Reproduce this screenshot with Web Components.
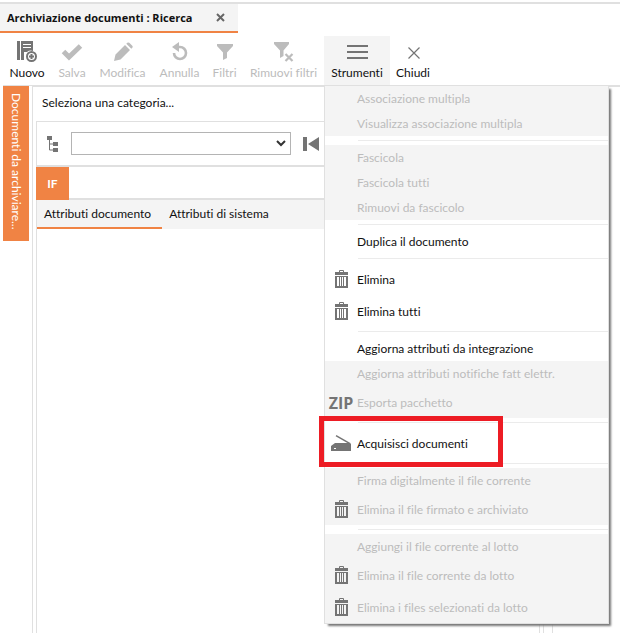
<!DOCTYPE html>
<html lang="it">
<head>
<meta charset="utf-8">
<title>Archiviazione documenti : Ricerca</title>
<style>
  html, body { margin: 0; height: 100%; }
  body {
    font: 12px/16px Lato, "Noto Sans", sans-serif; font-variant-ligatures: none;
    color: #111; background: #fff; overflow: hidden;
    --accent: #f08344; --line: #e0e0e0; --soft: #f4f4f4; --off: #bcbcbc; --icon: #747474;
  }
</style>
</head>
<body>
<archive-app></archive-app>

<script>
const define = (name, html, setup) => {
  const tpl = document.createElement('template');
  tpl.innerHTML = html;
  customElements.define(name, class extends HTMLElement {
    constructor() {
      super();
      this.attachShadow({ mode: 'open' }).append(tpl.content.cloneNode(true));
    }
    connectedCallback() { if (setup) setup(this, this.shadowRoot); }
  });
};

const icons = {
  nuovo: [20, 22, '<path fill="currentColor" d="M0 0h3v19H0zM4 0h12v10a6 6 0 0 0-6 1H7v8H4z"/><path stroke="#fff" d="M6 3.500h8M6 6.500h8"/><circle cx="14.500" cy="15.500" r="4.500" fill="#fff" stroke="currentColor" stroke-width="2"/><path stroke="currentColor" stroke-width="2" d="M14.500 13v5M12 15.500h5"/>'],
  salva: [22, 18, '<path fill="none" stroke="currentColor" stroke-width="5" d="M2.500 8.500l5.500 5.500L19.500 3"/>'],
  modifica: [20, 20, '<path fill="currentColor" d="M1 19l1.500-6.500L12 3l5 5-9.500 9.500zM13.300 1.800l1-1q1-.8 2 0l3 3q.8 1 0 2l-1 1z"/>'],
  annulla: [18, 20, '<path fill="none" stroke="currentColor" stroke-width="2.600" d="M4 5h5a6 6 0 1 1-6 6"/><path fill="currentColor" d="M1 5l7-5v10z"/>'],
  filtri: [16, 16, '<path fill="currentColor" d="M0 0h16v2l-6 6.500V14l-4 2V8.500L0 2z"/>'],
  rimuovi: [20, 20, '<path fill="currentColor" d="M0 0h15v2L9.500 8.500V14L6 16V8.500L0 2z"/><path stroke="currentColor" stroke-width="2.200" d="M11.500 12l7 7M18.500 12l-7 7"/>'],
  strumenti: [22, 14, '<path fill="currentColor" d="M1 0h21v2H1zM1 6h21v2H1zM1 12h21v2H1z"/>'],
  chiudi: [14, 14, '<path stroke="currentColor" stroke-width="1.200" d="M2.500 2.500l11 11M13.500 2.500l-11 11"/>'],
  x: [9, 9, '<path stroke="currentColor" stroke-width="2" d="M1 1l7 7M8 1L1 8"/>'],
  albero: [12, 16, '<path fill="currentColor" d="M0 0h5v4H0zM6 6h5v4H6zM6 12h5v4H6z"/><path fill="none" stroke="currentColor" d="M2.500 4v10H6M2.500 8H6"/>'],
  primo: [16, 14, '<path fill="currentColor" d="M0 0h4v14H0zM16 0v14L5 7z"/>'],
  freccia: [10, 7, '<path fill="none" stroke="currentColor" stroke-width="2" d="M1 1l4 4 4-4"/>'],
  cestino: [13, 20, '<path fill="none" stroke="currentColor" d="M4.500 2V.5h4V2"/><path fill="currentColor" d="M0 2h13v3H0z"/><path fill="currentColor" fill-rule="evenodd" d="M0 6h13v12H0zM2 7v9h2V7zM5 7v9h1V7zM7 7v9h1V7zM9 7v9h2V7z"/>'],
  scanner: [20, 18, '<path stroke="currentColor" stroke-width="1.400" d="M5 .7l14 8"/><path fill="currentColor" d="M4 8h15l1 1v7H0v-5z"/><path fill="#fff" d="M3 13h2v1H3z"/>']
};

define('ui-icon', `<style>:host{display:block;flex:none}svg{display:block}</style><svg aria-hidden="true"></svg>`, (el, root) => {
  const [w, h, body] = icons[el.getAttribute('name')];
  const svg = root.querySelector('svg');
  svg.setAttribute('width', w); svg.setAttribute('height', h);
  svg.setAttribute('viewBox', `0 0 ${w} ${h}`);
  svg.innerHTML = body;
});

define('page-tab', `
<style>
  :host { display: flex; border-top: 2px solid var(--line); margin-top: 2px; }
  .tab { display: flex; align-items: center; gap: 24px; height: 27px; padding: 0 13px 0 7px;
    background: var(--soft); border-bottom: 2px solid var(--accent);
    font: 700 11px/16px "Open Sans", sans-serif; }
  button { border: 0; background: none; padding: 0; color: #666; }
</style>
<div class="tab"><slot></slot><button aria-label="Chiudi scheda"><ui-icon name="x"></ui-icon></button></div>`);

define('tool-button', `
<style>
  :host { display: block; position: relative; flex: none; }
  button { display: flex; flex-direction: column; align-items: center; width: 100%; height: 49px;
    padding: 0 0 4px; border: 0; background: none; font: inherit; color: inherit; white-space: nowrap; }
  .pic { flex: 1; display: flex; align-items: center; padding-top: 2px; color: var(--icon); }
  button:disabled, button:disabled .pic { color: var(--off); }
  :host([open]) button { background: var(--soft); }
</style>
<button><span class="pic"></span><slot></slot></button><slot name="menu"></slot>`, (el, root) => {
  root.querySelector('.pic').innerHTML = `<ui-icon name="${el.getAttribute('icon')}"></ui-icon>`;
  root.querySelector('button').disabled = el.hasAttribute('disabled');
  el.style.width = el.getAttribute('width') + 'px';
});

define('menu-item', `
<style>
  :host { display: block; position: relative; }
  button { display: grid; grid-template-columns: 32px 1fr; align-items: center; width: 100%; height: 25px;
    padding: 0; border: 0; background: #fff; font: inherit; color: inherit; text-align: left; white-space: nowrap; }
  :host([icon]) button, :host([mark]) button { height: 32px; padding-top: 2px; }
  button:disabled { background: var(--soft); color: var(--off); }
  .pic { display: flex; justify-content: center; color: var(--icon); }
  .zip { font: 700 16px/16px "Open Sans", sans-serif; }
  .frame { display: none; position: absolute; left: -6px; top: -11px; width: 174px; height: 41px;
    border: 5px solid #ed1c24; pointer-events: none; z-index: 1; }
  :host([highlight]) .frame { display: block; }
</style>
<button role="menuitem"><span class="pic"></span><slot></slot></button><span class="frame"></span>`, (el, root) => {
  const pic = root.querySelector('.pic');
  if (el.hasAttribute('icon')) pic.innerHTML = `<ui-icon name="${el.getAttribute('icon')}"></ui-icon>`;
  if (el.hasAttribute('mark')) { pic.textContent = el.getAttribute('mark'); pic.classList.add('zip'); }
  root.querySelector('button').disabled = el.hasAttribute('disabled');
});

define('menu-line', `<style>:host{display:block;padding:4px 0 4px 33px;background:#fff}i{display:block;height:1px;background:#ebebeb}</style><i></i>`);

define('drop-menu', `
<style>
  :host { display: block; position: absolute; z-index: 5; left: 0; top: 100%; width: 283px;
    border: 1px solid var(--line); background: #fff; box-shadow: 3px 3px 2px -1px #777; }
</style>
<slot></slot>`);

define('tool-bar', `<style>:host{display:flex;padding:3px 0 0 2px}</style><slot></slot>`);

define('side-tab', `
<style>
  :host { display: block; width: 29px; flex: none; }
  button { display: block; writing-mode: vertical-rl; width: 26px; height: 155px; padding: 7px 0 0; border: 0;
    background: var(--accent); color: #fff; font: inherit; text-align: left; }
</style>
<button><slot></slot></button>`);

define('category-panel', `
<style>
  :host { display: flex; flex: 1; min-width: 0; flex-direction: column; border: solid var(--line); border-width: 1px 1px 0; padding: 0 3px; }
  .title { padding: 8px 6px 10px; }
  .box { flex: 1; border: solid var(--line); border-width: 1px 1px 0; }
  .pick { display: flex; align-items: center; gap: 12px; height: 43px; padding-left: 10px; color: var(--icon); border-bottom: 2px solid var(--line); }
  .combo { position: relative; width: 220px; }
  select { display: block; width: 100%; height: 23px; border: 1px solid #b4b4b4; background: #fff; appearance: none; border-radius: 0; font: inherit; }
  .combo ui-icon { position: absolute; right: 5px; top: 8px; color: #333; pointer-events: none; }
  button { border: 0; background: none; padding: 0; font: inherit; color: inherit; }
  .if { display: flex; border-bottom: 2px solid var(--line); height: 31px; }
  .if button { width: 33px; height: 33px; margin-left: -1px; background: var(--accent); color: #fff; font-weight: 700; }
  .tabs { display: flex; background: var(--soft); height: 29px; }
  .tabs button { padding: 0 11px 2px 7px; }
  .tabs .on { border-bottom: 2px solid var(--accent); padding-bottom: 0; }
</style>
<label class="title" for="cat">Seleziona una categoria...</label>
<div class="box">
  <div class="pick">
    <ui-icon name="albero"></ui-icon>
    <div class="combo"><select id="cat"><option></option></select><ui-icon name="freccia"></ui-icon></div>
    <button aria-label="Primo"><ui-icon name="primo"></ui-icon></button>
  </div>
  <div class="if"><button>IF</button></div>
  <div class="tabs"><button class="on">Attributi documento</button><button>Attributi di sistema</button></div>
</div>`);

define('archive-app', `
<style>
  :host { display: flex; flex-direction: column; height: 100%; }
  .work { flex: 1; display: flex; margin-left: 3px; border-top: 1px solid var(--line); }
  .right { width: 67px; margin-left: 8px; border: solid var(--line); border-width: 1px 0 0 1px; }
</style>
<page-tab>Archiviazione documenti : Ricerca</page-tab>
<tool-bar>
  <tool-button icon="nuovo" width="50">Nuovo</tool-button>
  <tool-button icon="salva" width="40" disabled>Salva</tool-button>
  <tool-button icon="modifica" width="61" disabled>Modifica</tool-button>
  <tool-button icon="annulla" width="53" disabled>Annulla</tool-button>
  <tool-button icon="filtri" width="37" disabled>Filtri</tool-button>
  <tool-button icon="rimuovi" width="81" disabled>Rimuovi filtri</tool-button>
  <tool-button icon="strumenti" width="66" open>Strumenti
    <drop-menu slot="menu" role="menu">
      <menu-item disabled>Associazione multipla</menu-item>
      <menu-item disabled>Visualizza associazione multipla</menu-item>
      <menu-line></menu-line>
      <menu-item disabled>Fascicola</menu-item>
      <menu-item disabled>Fascicola tutti</menu-item>
      <menu-item disabled>Rimuovi da fascicolo</menu-item>
      <menu-line></menu-line>
      <menu-item>Duplica il documento</menu-item>
      <menu-line></menu-line>
      <menu-item icon="cestino">Elimina</menu-item>
      <menu-item icon="cestino">Elimina tutti</menu-item>
      <menu-line></menu-line>
      <menu-item>Aggiorna attributi da integrazione</menu-item>
      <menu-item disabled>Aggiorna attributi notifiche fatt elettr.</menu-item>
      <menu-item mark="ZIP" disabled>Esporta pacchetto</menu-item>
      <menu-line></menu-line>
      <menu-item icon="scanner" highlight>Acquisisci documenti</menu-item>
      <menu-line></menu-line>
      <menu-item disabled>Firma digitalmente il file corrente</menu-item>
      <menu-item icon="cestino" disabled>Elimina il file firmato e archiviato</menu-item>
      <menu-line></menu-line>
      <menu-item disabled>Aggiungi il file corrente al lotto</menu-item>
      <menu-item icon="cestino" disabled>Elimina il file corrente da lotto</menu-item>
      <menu-item icon="cestino" disabled>Elimina i files selezionati da lotto</menu-item>
    </drop-menu>
  </tool-button>
  <tool-button icon="chiudi" width="46">Chiudi</tool-button>
</tool-bar>
<div class="work">
  <side-tab>Documenti da archiviare...</side-tab>
  <category-panel></category-panel>
  <div class="right"></div>
</div>`);
</script>
</body>
</html>
